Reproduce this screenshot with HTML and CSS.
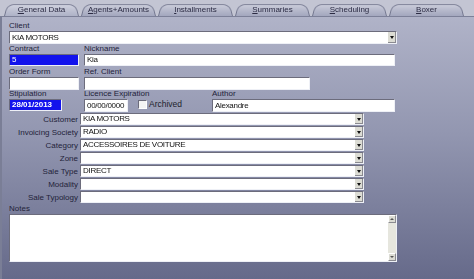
FILE: index.html
```html
<!DOCTYPE html>
<html lang="en">
<head>
    <meta charset="UTF-8">
    <title>General Data</title>
    <link rel="stylesheet" href="styles.css">
</head>
<body>
    <div class="window">
        <!-- Tab strip -->
        <div class="tabs">
            <div class="tab active"><u>G</u>eneral Data</div>
            <div class="tab"><u>A</u>gents+Amounts</div>
            <div class="tab"><u>I</u>nstallments</div>
            <div class="tab"><u>S</u>ummaries</div>
            <div class="tab"><u>S</u>cheduling</div>
            <div class="tab"><u>B</u>oxer</div>
        </div>

        <div class="panel">
            <div class="group">
                <div class="label">Client</div>
                <div class="field combo w-client">KIA MOTORS<span class="drop"></span></div>
            </div>

            <div class="line">
                <div class="group">
                    <div class="label">Contract</div>
                    <div class="field selected w-small">5</div>
                </div>
                <div class="group">
                    <div class="label">Nickname</div>
                    <div class="field w-nick">Kia</div>
                </div>
            </div>

            <div class="line gap1">
                <div class="group">
                    <div class="label">Order Form</div>
                    <div class="field tall w-small"></div>
                </div>
                <div class="group">
                    <div class="label">Ref. Client</div>
                    <div class="field tall w-ref"></div>
                </div>
            </div>

            <div class="line stip">
                <div class="group">
                    <div class="label">Stipulation</div>
                    <div class="field selected bold w-date">28/01/2013</div>
                </div>
                <div class="group licence">
                    <div class="label">Licence Expiration</div>
                    <div class="inline">
                        <div class="field tall w-licence">00/00/0000</div>
                        <span class="check"></span>
                        <span class="check-label">Archived</span>
                    </div>
                </div>
                <div class="group author">
                    <div class="label">Author</div>
                    <div class="field tall w-author">Alexandre</div>
                </div>
            </div>

            <div class="combos">
                <div class="combo-row">
                    <span class="side-label">Customer</span>
                    <div class="field combo w-combo">KIA MOTORS<span class="drop"></span></div>
                </div>
                <div class="combo-row">
                    <span class="side-label">Invoicing Society</span>
                    <div class="field combo w-combo">RADIO<span class="drop"></span></div>
                </div>
                <div class="combo-row">
                    <span class="side-label">Category</span>
                    <div class="field combo w-combo">ACCESSOIRES DE VOITURE<span class="drop"></span></div>
                </div>
                <div class="combo-row">
                    <span class="side-label">Zone</span>
                    <div class="field combo w-combo"><span class="drop"></span></div>
                </div>
                <div class="combo-row">
                    <span class="side-label">Sale Type</span>
                    <div class="field combo w-combo">DIRECT<span class="drop"></span></div>
                </div>
                <div class="combo-row">
                    <span class="side-label">Modality</span>
                    <div class="field combo w-combo"><span class="drop"></span></div>
                </div>
                <div class="combo-row">
                    <span class="side-label">Sale Typology</span>
                    <div class="field combo w-combo"><span class="drop"></span></div>
                </div>
            </div>

            <div class="group notes">
                <div class="label">Notes</div>
                <div class="field memo">
                    <div class="scrollbar">
                        <span class="arrow up"></span>
                        <span class="arrow down"></span>
                    </div>
                </div>
            </div>
        </div>
    </div>
</body>
</html>
```

FILE: styles.css
```css
body {
    margin: 0;
    font-family: 'Liberation Sans', Arial, sans-serif;
    font-size: 8px;
    color: #1e1e2c;
}

.window {
    width: 474px;
    height: 279px;
    display: flex;
    flex-direction: column;
    background: #c3c5d3;
}

/* Tabs */
.tabs {
    display: flex;
    gap: 2px;
    height: 17px;
    padding-left: 4px;
    border-bottom: 1px solid #7c8098;
    box-sizing: border-box;
}

.tab {
    position: relative;
    z-index: 0;
    width: 75px;
    height: 13px;
    margin-top: 3px;
    line-height: 14px;
    text-align: center;
    color: #2c2c44;
}

.tab::before {
    content: '';
    position: absolute;
    inset: 0;
    z-index: -1;
    background: linear-gradient(#c9cbd9, #a3a7be);
    border: 1px solid #72768e;
    border-bottom: none;
    border-radius: 7px 7px 0 0;
    transform: perspective(24px) rotateX(10deg);
    transform-origin: bottom;
}

.tab.active::before {
    background: linear-gradient(#cfd1de, #aeb2c7);
}

/* Panel */
.panel {
    flex: 1;
    padding: 4px 0 0 7px;
    border-left: 2px solid #7a7e96;
    background: linear-gradient(#b0b3c8, #9296b0 45%, #666a8a);
}

.label {
    height: 9px;
    line-height: 9px;
    color: #23233a;
}

.group > .label:first-child {
    height: 10px;
    line-height: 10px;
}

.line {
    display: flex;
    gap: 5px;
}

.gap1 {
    margin-top: 1px;
}

.stip {
    margin-top: -1px;
}

.field {
    position: relative;
    height: 12px;
    box-sizing: border-box;
    padding-left: 2px;
    line-height: 10px;
    letter-spacing: -0.3px;
    background: #fff;
    border: 1px solid;
    border-color: #6c6c7c #eef0f6 #eef0f6 #6c6c7c;
    color: #111;
    white-space: nowrap;
    overflow: hidden;
}

.field.tall {
    height: 13px;
    line-height: 11px;
}

.selected {
    background: #1212ec;
    color: #fff;
}

.bold {
    font-weight: bold;
    letter-spacing: 0;
}

.w-client { width: 388px; height: 13px; line-height: 11px; }
.w-small { width: 70px; }
.w-nick { width: 311px; }
.w-ref { width: 226px; }
.w-date { width: 53px; }
.w-licence { width: 44px; }
.w-author { width: 183px; }
.w-combo { width: 284px; }

.licence {
    margin-left: 17px;
}

.inline {
    display: flex;
    align-items: center;
    width: 123px;
}

.check {
    width: 9px;
    height: 9px;
    margin: -3px 2px 0 10px;
    box-sizing: border-box;
    background: #f4f4f4;
    border: 1px solid;
    border-color: #6c6c7c #fff #fff #6c6c7c;
}

.check-label {
    margin-top: -4px;
    font-size: 8.5px;
}

/* Dropdown button */
.drop {
    position: absolute;
    right: 0;
    top: 0;
    bottom: 0;
    width: 8px;
    background: #dcdcd4;
    border-left: 1px solid #fff;
    box-shadow: inset -1px -1px 0 #8a8a90;
}

.drop::after {
    content: '';
    position: absolute;
    left: 2px;
    top: 4px;
    border-left: 2px solid transparent;
    border-right: 2px solid transparent;
    border-top: 3px solid #111;
}

/* Side label rows */
.combos {
    display: flex;
    flex-direction: column;
    gap: 1px;
    margin-top: 1px;
}

.combo-row {
    display: flex;
    align-items: center;
}

.side-label {
    width: 71px;
    padding-right: 2px;
    box-sizing: border-box;
    text-align: right;
    color: #23233a;
}

.notes {
    margin-top: 1px;
}

.memo {
    width: 388px;
    height: 48px;
}

.scrollbar {
    position: absolute;
    right: 0;
    top: 0;
    bottom: 0;
    width: 8px;
    background: #e6e6de;
}

.arrow {
    position: absolute;
    left: 0;
    width: 8px;
    height: 8px;
    box-sizing: border-box;
    background: #dcdcd4;
    border: 1px solid;
    border-color: #fff #8a8a90 #8a8a90 #fff;
}

.arrow.up { top: 0; }
.arrow.down { bottom: 0; }

.arrow::after {
    content: '';
    position: absolute;
    left: 1px;
    border-left: 2px solid transparent;
    border-right: 2px solid transparent;
}

.arrow.up::after {
    top: 2px;
    border-bottom: 2px solid #555;
}

.arrow.down::after {
    top: 2px;
    border-top: 2px solid #555;
}
```
